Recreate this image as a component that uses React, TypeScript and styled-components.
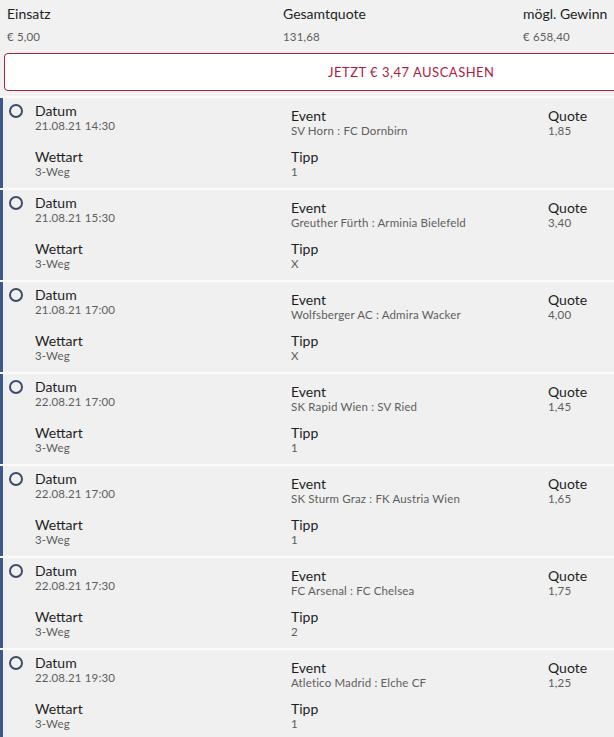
import * as React from 'react';
import styled, { createGlobalStyle } from 'styled-components';

const GlobalStyle = createGlobalStyle`
  html, body {
    margin: 0;
    padding: 0;
    background: #f1f1f1;
    overflow: hidden;
  }
  body {
    font-family: Lato, "Open Sans", Arial, sans-serif;
    color: #222;
  }
`;

/**
 * Whole bet slip, slightly wider than the window (right edge is cut).
 */
const Slip = styled.div`
  width: 640px;
  background: #f1f1f1;
`;

const Summary = styled.div`
  display: grid;
  grid-template-columns: 276px 240px 1fr;
  padding: 5px 0 0 7px;
  height: 48px;
  box-sizing: border-box;
  height: 53px;
`;

const Label = styled.div`
  font-size: 14px;
  line-height: 17px;
  color: #1e1e1e;
`;

const Value = styled.div<{ gap?: number }>`
  font-size: 11.5px;
  line-height: 14px;
  color: #5e5e5e;
  letter-spacing: 0.15px;
  margin-top: ${props => props.gap ?? 0}px;
`;

const CashoutButton = styled.button`
  display: block;
  margin: 0 0 5px 4px;
  width: 640px;
  height: 38px;
  background: #fff;
  border: 1px solid #a8203c;
  border-radius: 4px;
  color: #b01a3c;
  font-family: inherit;
  font-size: 13px;
  letter-spacing: 0.5px;
  text-align: left;
  padding-left: 323px;
`;

const List = styled.div`
  display: flex;
  flex-direction: column;
  gap: 2px;
  background: #fbfbfb;
  padding-top: 2px;
`;

const Card = styled.div`
  position: relative;
  height: 90px;
  background: #f0f0f0;
  border-left: 3px solid #3a5a8e;
  display: grid;
  grid-template-columns: 256px 257px 1fr;
  grid-template-rows: 46px 44px;
  padding-left: 32px;
  box-sizing: border-box;
`;

const Cell = styled.div<{ offset?: number }>`
  padding-top: ${props => props.offset ?? 0}px;
`;

const Radio = styled.span`
  position: absolute;
  left: 6px;
  top: 6px;
  width: 10px;
  height: 10px;
  border: 2px solid #3c4c6c;
  border-radius: 50%;
`;

interface Bet {
  date: string;
  event: string;
  quote: string;
  tip: string;
}

const bets: Bet[] = [
  { date: '21.08.21 14:30', event: 'SV Horn : FC Dornbirn', quote: '1,85', tip: '1' },
  { date: '21.08.21 15:30', event: 'Greuther Fürth : Arminia Bielefeld', quote: '3,40', tip: 'X' },
  { date: '21.08.21 17:00', event: 'Wolfsberger AC : Admira Wacker', quote: '4,00', tip: 'X' },
  { date: '22.08.21 17:00', event: 'SK Rapid Wien : SV Ried', quote: '1,45', tip: '1' },
  { date: '22.08.21 17:00', event: 'SK Sturm Graz : FK Austria Wien', quote: '1,65', tip: '1' },
  { date: '22.08.21 17:30', event: 'FC Arsenal : FC Chelsea', quote: '1,75', tip: '2' },
  { date: '22.08.21 19:30', event: 'Atletico Madrid : Elche CF', quote: '1,25', tip: '1' },
];

const BetCard: React.FunctionComponent<{ bet: Bet }> = ({ bet }): JSX.Element => (
  <Card>
    <Radio />
    <Cell offset={4}>
      <Label>Datum</Label>
      <Value>{bet.date}</Value>
    </Cell>
    <Cell offset={9}>
      <Label>Event</Label>
      <Value>{bet.event}</Value>
    </Cell>
    <Cell offset={9}>
      <Label>Quote</Label>
      <Value>{bet.quote}</Value>
    </Cell>
    <Cell offset={4}>
      <Label>Wettart</Label>
      <Value>3-Weg</Value>
    </Cell>
    <Cell offset={4}>
      <Label>Tipp</Label>
      <Value>{bet.tip}</Value>
    </Cell>
  </Card>
);

const App: React.FunctionComponent = (): JSX.Element => (
  <>
    <GlobalStyle />
    <Slip>
      <Summary>
        <div>
          <Label>Einsatz</Label>
          <Value gap={8}>€ 5,00</Value>
        </div>
        <div>
          <Label>Gesamtquote</Label>
          <Value gap={8}>131,68</Value>
        </div>
        <div>
          <Label>mögl. Gewinn</Label>
          <Value gap={8}>€ 658,40</Value>
        </div>
      </Summary>
      <CashoutButton>JETZT € 3,47 AUSCASHEN</CashoutButton>
      <List>
        {bets.map((bet, i) => (
          <BetCard key={i} bet={bet} />
        ))}
      </List>
    </Slip>
  </>
);

export default App;
